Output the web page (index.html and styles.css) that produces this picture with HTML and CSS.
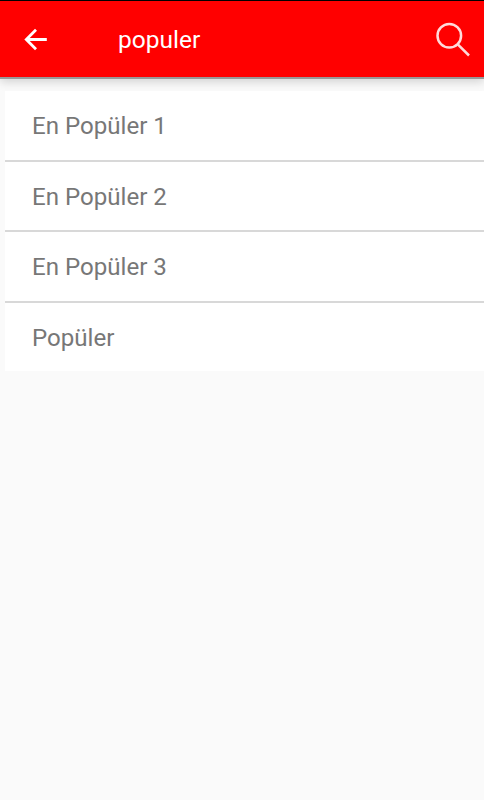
FILE: index.html
```html
<!DOCTYPE html>
<html lang="tr">
<head>
  <meta charset="utf-8">
  <title>populer</title>
  <link rel="stylesheet" href="styles.css">
</head>
<body>
  <header class="toolbar">
    <svg class="back-icon" viewBox="0 0 36 36" width="36" height="36">
      <path d="M28.8 18.5H8.5M18 8.8L8.3 18.5L18 28.2"/>
    </svg>
    <h1>populer</h1>
    <svg class="search-icon" viewBox="0 0 36 36" width="36" height="36">
      <circle cx="14.3" cy="14.8" r="11.8"/>
      <path d="M22.8 23.3L34 34.5"/>
    </svg>
  </header>

  <ul class="list">
    <li>En Popüler 1</li>
    <li>En Popüler 2</li>
    <li>En Popüler 3</li>
    <li>Popüler</li>
  </ul>
</body>
</html>
```

FILE: styles.css
```css
body {
  margin: 0;
  min-height: 100vh;
  background-color: #fafafa;
  font-family: Roboto, sans-serif;
}

.toolbar {
  box-sizing: border-box;
  display: flex;
  align-items: center;
  height: 79px;
  padding: 0 13px 0 18px;
  border-top: 1px solid #000;
  border-bottom: 2px solid #999;
  background-color: #ff0000;
  box-shadow: 0 3px 9px rgba(0, 0, 0, 0.16);
  color: #fff;
}

.toolbar h1 {
  flex: 1;
  margin: 0 0 0 64px;
  font-size: 24.5px;
  font-weight: normal;
}

.back-icon {
  fill: none;
  stroke: #fff;
  stroke-width: 2.8;
}

.search-icon {
  fill: none;
  stroke: #ffdada;
  stroke-width: 2.5;
}

.list {
  position: relative;
  margin: 12px 0 0 5px;
  padding: 0;
  list-style: none;
  background-color: #fff;
}

.list li {
  height: 69px;
  padding-left: 27px;
  color: #777;
  font-size: 24.1px;
  line-height: 71px;
}

.list li + li {
  height: 68.33px;
  border-top: 2px solid #d8d8d8;
  line-height: 70px;
}
```
